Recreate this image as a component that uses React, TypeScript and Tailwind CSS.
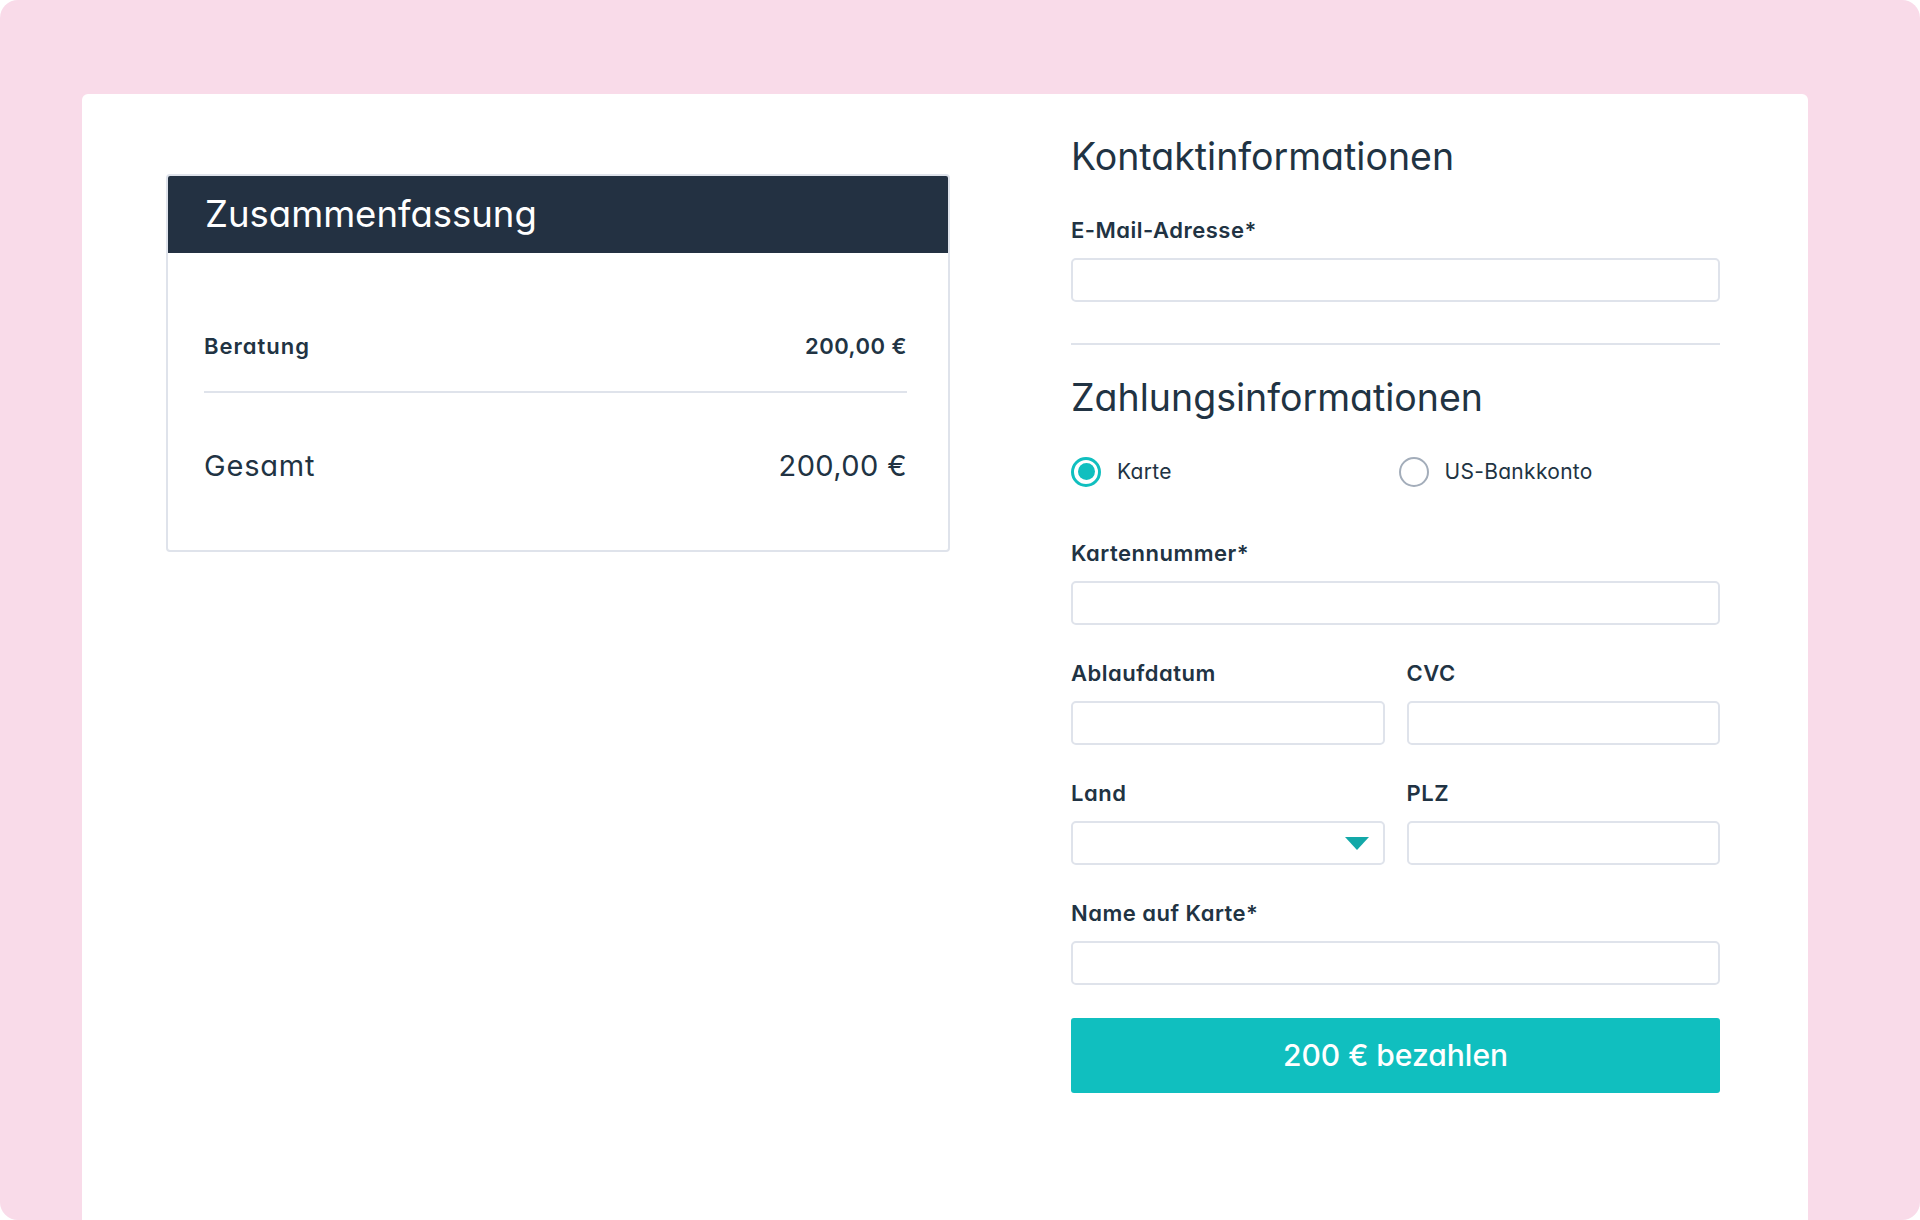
import React from 'react';

const Label = ({ children }: { children: React.ReactNode }) => (
  <div className="h-7 mb-[14px] flex items-center text-[22px] font-semibold tracking-[0.5px] text-[#213343] leading-none">{children}</div>
);

const Input = ({ children }: { children?: React.ReactNode }) => (
  <div className="relative h-[44px] w-full rounded-[5px] border-2 border-[#dfe3eb] bg-white">{children}</div>
);

const Field = ({ label, children }: { label: string; children?: React.ReactNode }) => (
  <div className="flex flex-col">
    <Label>{label}</Label>
    <Input>{children}</Input>
  </div>
);

export default function App() {
  return (
    <div className="w-full h-[1220px] bg-white font-['Inter',sans-serif] [font-feature-settings:'cv11'] text-[#213343]">
      <div className="h-full rounded-[18px] bg-[#f9dbe9] pl-[82px] pt-[94px]">
        <div className="w-[1726px] h-full rounded-t-[6px] bg-white flex items-start pl-[84px]">
          {/* Summary card */}
          <div className="mt-[80px] w-[784px] rounded-[4px] border-2 border-[#dfe3eb] overflow-hidden">
            <div className="h-[77px] bg-[#233142] flex items-center pl-[37px]">
              <h2 className="text-[36.5px] text-white leading-none">Zusammenfassung</h2>
            </div>
            <div className="pl-[36px] pr-[41px] pt-[79px] pb-[66px]">
              <div className="h-7 flex items-center justify-between text-[22px] font-semibold tracking-[0.5px]">
                <span className="tracking-[1px]">Beratung</span>
                <span>200,00 €</span>
              </div>
              <div className="mt-[31px] h-[2px] bg-[#dfe3eb]" />
              <div className="mt-[55px] h-9 flex items-center justify-between text-[29px] tracking-[0.4px]">
                <span className="tracking-[0.8px]">Gesamt</span>
                <span>200,00 €</span>
              </div>
            </div>
          </div>

          {/* Form */}
          <div className="ml-[121px] w-[649px] pt-[41px] flex flex-col">
            <h2 className="h-[44px] flex items-center text-[37.5px] leading-none">Kontaktinformationen</h2>
            <div className="mt-[37px]">
              <Field label="E-Mail-Adresse*" />
            </div>
            <div className="mt-[41px] h-[2px] bg-[#dfe3eb]" />
            <h2 className="mt-[31px] h-[44px] flex items-center text-[37.5px] leading-none">Zahlungsinformationen</h2>

            <div className="mt-[36px] grid grid-cols-2 h-[30px]">
              <div className="flex items-center gap-4">
                <span className="w-[30px] h-[30px] rounded-full border-[3px] border-[#10bfbf] flex items-center justify-center">
                  <span className="w-[17px] h-[17px] rounded-full bg-[#10bfbf]" />
                </span>
                <span className="text-[21px] tracking-[0.3px]">Karte</span>
              </div>
              <div className="flex items-center gap-4 pl-[3px]">
                <span className="w-[30px] h-[30px] rounded-full border-2 border-[#a3adba]" />
                <span className="text-[21px] tracking-[0.3px]">US-Bankkonto</span>
              </div>
            </div>

            <div className="mt-[53px] flex flex-col gap-[34px]">
              <Field label="Kartennummer*" />
              <div className="grid grid-cols-2 gap-[22px]">
                <Field label="Ablaufdatum" />
                <Field label="CVC" />
              </div>
              <div className="grid grid-cols-2 gap-[22px]">
                <Field label="Land">
                  <svg className="absolute right-[14px] top-[14px]" width="24" height="13" viewBox="0 0 24 13">
                    <path d="M0 0 H24 L12 13 Z" fill="#13a8a8" />
                  </svg>
                </Field>
                <Field label="PLZ" />
              </div>
              <Field label="Name auf Karte*" />
            </div>

            <button className="mt-[33px] h-[75px] w-full rounded-[3px] bg-[#10bfbf] text-white text-[30px] font-medium">
              200 € bezahlen
            </button>
          </div>
        </div>
      </div>
    </div>
  );
}
